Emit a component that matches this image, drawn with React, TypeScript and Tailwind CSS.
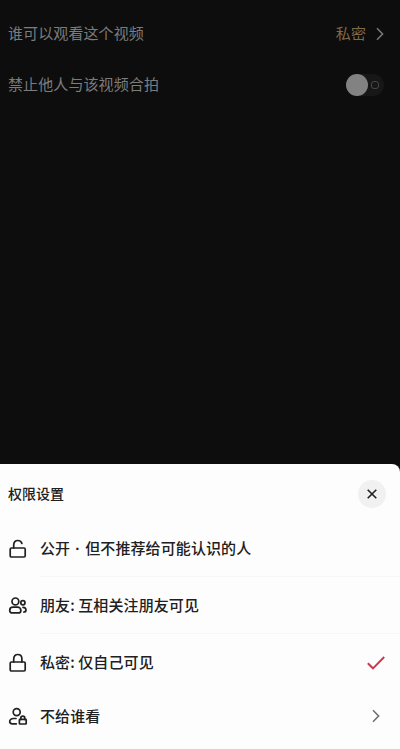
import type { ReactNode } from "react"

const icon = {
    width: 20,
    height: 20,
    viewBox: "0 0 20 20",
    fill: "none",
    stroke: "#202020",
    strokeWidth: 1.7,
    strokeLinecap: "round",
    strokeLinejoin: "round",
} as const

function UnlockIcon() {
    return (
        <svg {...icon}>
            <rect x="2.2" y="9" width="15" height="9" rx="1.2" />
            <path d="M5.700 9V6C5.700 3.200 7.400 1.500 9.800 1.500c2.100 0 3.600 1.100 4.100 3" />
        </svg>
    )
}

function LockIcon() {
    return (
        <svg {...icon}>
            <rect x="2.2" y="9" width="15" height="9" rx="1.2" />
            <path d="M5.700 9V6C5.700 3.200 7.400 1.500 9.800 1.500S13.900 3.200 13.900 6v3" />
        </svg>
    )
}

function FriendsIcon() {
    return (
        <svg {...icon}>
            <circle cx="7.400" cy="5.400" r="3.400" />
            <path d="M1.700 14.400c0-2 1.500-3.200 3.300-3.200h4.600c1.800 0 3.300 1.200 3.300 3.200 0 1.700-1.100 2.500-2.500 2.500H4.200c-1.400 0-2.500-.8-2.500-2.500z" />
            <circle cx="14.900" cy="6.700" r="2.100" />
            <path d="M15 11.300c1.900.2 3 1.300 3 2.700 0 1.200-.8 2-2.200 2" />
        </svg>
    )
}

function BlockedIcon() {
    return (
        <svg {...icon}>
            <circle cx="8.700" cy="5.100" r="3.500" />
            <path d="M8 11.500H5.500c-2.200 0-3.800 1.200-3.800 3 0 1.500 1 2.300 2.600 2.300h4" />
            <rect x="11.400" y="12.400" width="6.800" height="4.600" rx=".6" />
            <path d="M12.800 12.400v-1.200c0-1.200.8-2 2-2s2 .8 2 2v1.200" />
        </svg>
    )
}

function Chevron({ color }: { color: string }) {
    return (
        <svg width="8" height="14" viewBox="0 0 8 14" fill="none" stroke={color} strokeWidth="1.600">
            <path d="M1 1.200 6.600 7 1 12.800" />
        </svg>
    )
}

type RowProps = {
    icon: ReactNode
    label: ReactNode
    end?: ReactNode
    divider?: boolean
}

function Row({ icon, label, end, divider }: RowProps) {
    return (
        <li className="flex h-[57px] items-stretch pl-2 last:-mt-[3px]">
            <span className="flex w-8 items-center">{icon}</span>
            <span className={"flex flex-1 items-center justify-between " + (divider ? "border-b border-[#f6f6f6]" : "")}>
                <span className="text-[15px] font-medium tracking-[0.1px]">{label}</span>
                {end}
            </span>
        </li>
    )
}

export default function App() {
    return (
        <main className="flex h-[749px] w-[400px] flex-col overflow-hidden bg-[#0d0d0d] font-['Noto_Sans_CJK_SC',sans-serif]">
            <section className="h-[464px] pl-2 pr-4 pt-2 text-[15px] tracking-[0.1px] text-[#7c7c7c]">
                <div className="flex h-[51px] items-center justify-between">
                    <span>谁可以观看这个视频</span>
                    <span className="flex items-center gap-2.5 text-[#816a48]">
                        私密
                        <Chevron color="#777777" />
                    </span>
                </div>
                <div className="flex h-[51px] items-center justify-between">
                    <span>禁止他人与该视频合拍</span>
                    <span className="flex h-[22px] w-[38px] items-center justify-between rounded-full bg-[#171717] pr-[5px]">
                        <span className="size-[22px] rounded-full bg-[#828282]" />
                        <span className="size-2 rounded-[3px] border border-[#474747]" />
                    </span>
                </div>
            </section>

            <section className="flex-1 rounded-tr-lg bg-[#fdfdfd] text-[#202020]">
                <header className="flex h-[57px] items-center justify-between pl-2 pr-3.5 pt-[2px]">
                    <h2 className="-mt-0.5 text-sm font-medium">权限设置</h2>
                    <button className="flex size-7 items-center justify-center rounded-full bg-[#f1f1f1]">
                        <svg width="10" height="10" viewBox="0 0 10 10" stroke="#202020" strokeWidth="1.600">
                            <path d="M.7.7l8.600 8.600M9.300.7.7 9.300" />
                        </svg>
                    </button>
                </header>
                <ul className="-mt-px">
                    <Row
                        icon={<UnlockIcon />}
                        label={
                            <>
                                公开
                                <span className="inline-block w-[15px] text-center font-['Liberation_Sans',sans-serif] font-bold leading-none">·</span>
                                但不推荐给可能认识的人
                            </>
                        }
                        divider
                    />
                    <Row icon={<FriendsIcon />} label="朋友: 互相关注朋友可见" divider />
                    <Row
                        icon={<LockIcon />}
                        label="私密: 仅自己可见"
                        end={
                            <svg className="mr-[15px]" width="18" height="14" viewBox="0 0 18 14" fill="none" stroke="#c9374f" strokeWidth="1.900">
                                <path d="M.8 7.200 6 12.300 17.200 1" />
                            </svg>
                        }
                    />
                    <Row
                        icon={<BlockedIcon />}
                        label="不给谁看"
                        end={
                            <span className="mb-0.5 mr-5">
                                <Chevron color="#707070" />
                            </span>
                        }
                    />
                </ul>
            </section>
        </main>
    )
}
